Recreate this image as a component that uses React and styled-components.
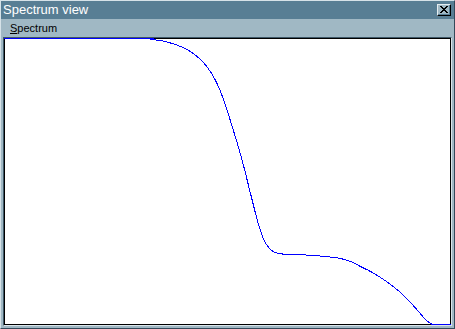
import React from "react";
import styled, { createGlobalStyle } from "styled-components";

const Global = createGlobalStyle`
  html, body { margin: 0; padding: 0; background: #a0b8c4; }
  body { font-family: "Liberation Sans", Arial, sans-serif; }
`;

const Window = styled.div`
  box-sizing: border-box;
  width: 455px;
  height: 329px;
  display: flex;
  flex-direction: column;
  background: #a0b8c4;
  border: 1px solid;
  border-color: #d6e2e8 #34495a #34495a #d6e2e8;
`;

const TitleBar = styled.div`
  height: 18px;
  flex: none;
  display: flex;
  align-items: center;
  justify-content: space-between;
  background: #587e94;
  padding: 0 3px 0 2px;
`;

const Title = styled.span`
  color: #ffffff;
  font-size: 13px;
  line-height: 18px;
  white-space: nowrap;
`;

const CloseButton = styled.div`
  box-sizing: border-box;
  width: 14px;
  height: 12px;
  background: #a0b8c4;
  border: 1px solid;
  border-color: #e4ecf0 #000000 #000000 #e4ecf0;
  box-shadow: inset -1px -1px 0 #587e94;
  display: flex;
  align-items: center;
  justify-content: center;
  padding: 0 1px 1px 0;
`;

const MenuBar = styled.div`
  height: 18px;
  flex: none;
  display: flex;
  align-items: center;
  padding-left: 9px;
`;

const MenuItem = styled.span`
  font-size: 11px;
  color: #000000;
  line-height: 18px;
  & u { text-decoration: underline; text-underline-offset: 1px; }
`;

const Client = styled.div`
  flex: 1;
  margin: 0 2px 2px 2px;
  display: flex;
  border: 1px solid;
  border-color: #3e5868 #dbe5ea #dbe5ea #3e5868;
`;

const PlotFrame = styled.div`
  position: relative;
  flex: 1;
  background: #ffffff;
  border: 1px solid #000000;
`;

const PlotSvg = styled.svg`
  position: absolute;
  left: -1px;
  top: -1px;
  overflow: visible;
`;

const OX = 4;
const OY = 38;
const pts = [
  [4, 38], [140, 38], [150, 39], [160, 40], [170, 42.5], [180, 46], [190, 51],
  [200, 59], [207, 67], [214, 78], [220, 91], [226, 108], [232, 127], [238, 147],
  [243, 165], [248, 185], [253, 205], [258, 224], [262, 236], [266, 244],
  [271, 250], [278, 253], [290, 254], [305, 254.5], [325, 256], [340, 258],
  [350, 261], [360, 266], [370, 271], [380, 277], [390, 284], [400, 292],
  [410, 302], [418, 311], [424, 318], [428, 321.5], [433, 324], [450, 324],
].map(([x, y]) => [x - OX + 0.5, y - OY + 0.5]);

function catmull(p) {
  let d = `M${p[0][0]},${p[0][1]}`;
  for (let i = 0; i < p.length - 1; i++) {
    const p0 = p[i - 1] || p[i];
    const p1 = p[i];
    const p2 = p[i + 1];
    const p3 = p[i + 2] || p2;
    const c1x = p1[0] + (p2[0] - p0[0]) / 6;
    const c1y = p1[1] + (p2[1] - p0[1]) / 6;
    const c2x = p2[0] - (p3[0] - p1[0]) / 6;
    const c2y = p2[1] - (p3[1] - p1[1]) / 6;
    d += ` C${c1x.toFixed(2)},${c1y.toFixed(2)} ${c2x.toFixed(2)},${c2y.toFixed(2)} ${p2[0]},${p2[1]}`;
  }
  return d;
}

const curve = catmull(pts);

function CloseGlyph() {
  const rows = [
    "XX    XX",
    " XX  XX ",
    "  XXXX  ",
    "   XX   ",
    "  XXXX  ",
    " XX  XX ",
    "XX    XX",
  ];
  const rects = [];
  rows.forEach((r, y) =>
    r.split("").forEach((c, x) => {
      if (c === "X") rects.push(<rect key={`${x}-${y}`} x={x} y={y} width="1" height="1" />);
    })
  );
  return (
    <svg width="8" height="7" viewBox="0 0 8 7" shapeRendering="crispEdges" fill="#000">
      {rects}
    </svg>
  );
}

export default function App() {
  return (
    <>
      <Global />
      <Window>
        <TitleBar>
          <Title>Spectrum view</Title>
          <CloseButton>
            <CloseGlyph />
          </CloseButton>
        </TitleBar>
        <MenuBar>
          <MenuItem>
            <u>S</u>pectrum
          </MenuItem>
        </MenuBar>
        <Client>
          <PlotFrame>
            <PlotSvg width="447" height="287" viewBox="0 0 447 287">
              <path d={curve} fill="none" stroke="#0000ff" strokeWidth="1" shapeRendering="crispEdges" />
            </PlotSvg>
          </PlotFrame>
        </Client>
      </Window>
    </>
  );
}
